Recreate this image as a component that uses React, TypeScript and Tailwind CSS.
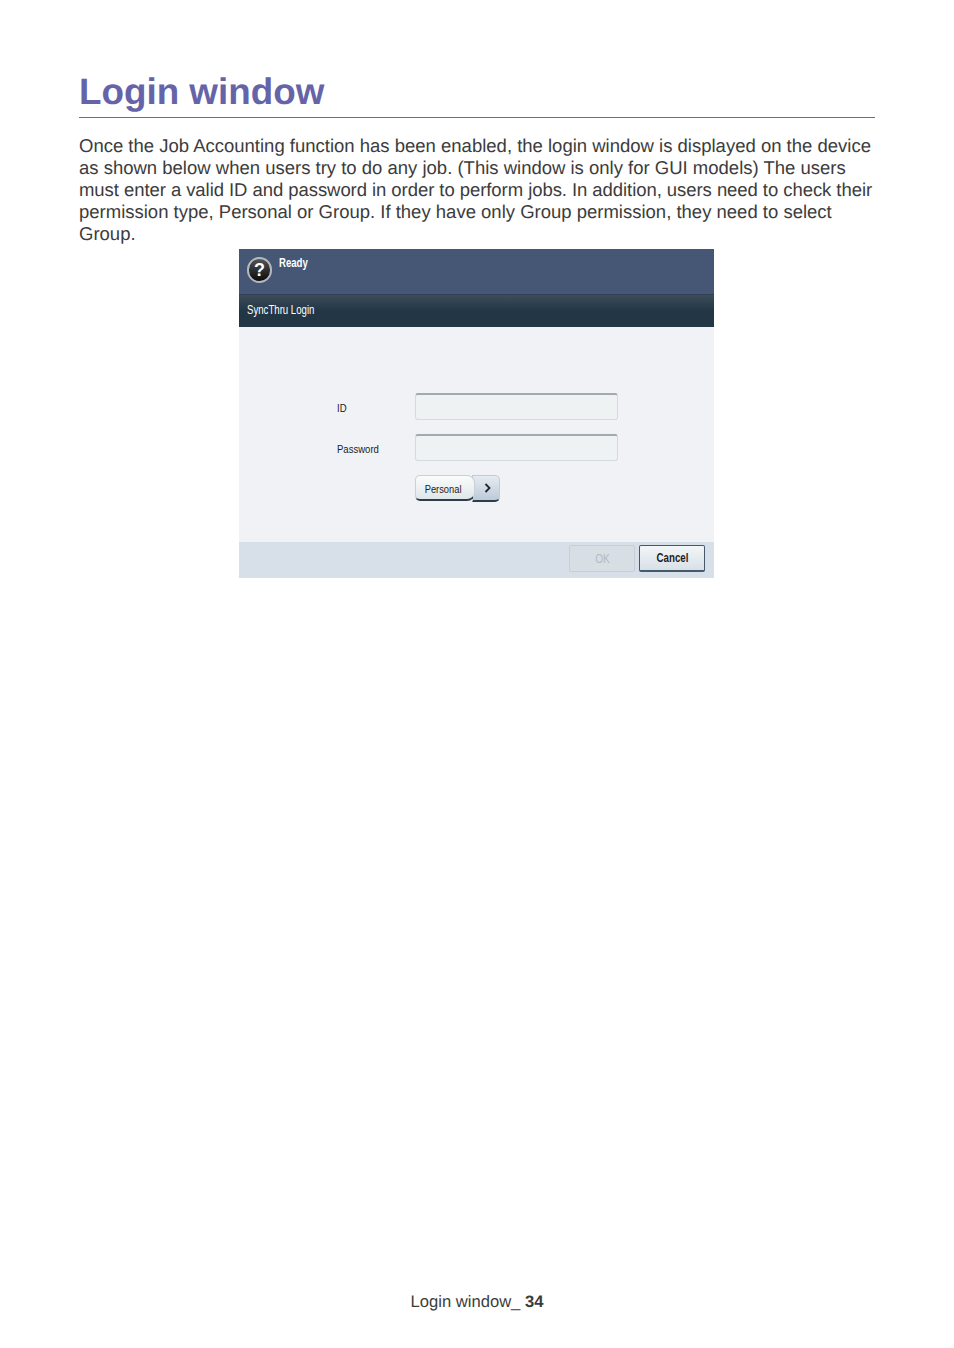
const font = "font-['Liberation_Sans',Arial,sans-serif]";

function HelpIcon() {
  return (
    <div className="flex h-[26px] w-[25px] items-center justify-center rounded-full border-2 border-[#b4b8c0] bg-gradient-to-b from-[#555] to-[#0c0c0c]">
      <span className="text-[18px] font-bold leading-none text-white">?</span>
    </div>
  );
}

function DeviceScreen() {
  return (
    <div className="ml-[160px] flex h-[329px] w-[475px] flex-col bg-[#f0f2f6]">
      {/* status bar */}
      <div className="flex h-[46px] gap-[6px] border-b border-[#303f55] bg-[#465675] pl-[8px] pt-[8px]">
        <HelpIcon />
        <span className="-mt-[1px] ml-[1px] inline-block origin-left scale-x-[.8] text-[12px] font-bold leading-[14px] text-white">Ready</span>
      </div>
      {/* title */}
      <div className="flex h-[32px] items-center bg-gradient-to-b from-[#3d4c58] via-[#223646] to-[#223646] pb-[3px] pl-[8px]">
        <span className="inline-block origin-left scale-x-[.77] text-[12.5px] leading-[14px] text-white">SyncThru Login</span>
      </div>
      {/* form */}
      <div className="flex flex-1 flex-col pl-[98px] pt-[66px]">
        <div className="flex h-[27px] items-center">
          <span className="w-[78px] origin-left scale-x-[.83] pt-[5px] text-[11.5px] text-[#222]">ID</span>
          <div className="h-[27px] w-[203px] rounded-[3px] border border-t-2 border-[#d5dadd] border-t-[#a3a9ad] bg-[#eff2f3]" />
        </div>
        <div className="mt-[14px] flex h-[27px] items-center">
          <span className="w-[78px] origin-left scale-x-[.83] pt-[5px] text-[11.5px] text-[#222]">Password</span>
          <div className="h-[27px] w-[203px] rounded-[3px] border border-t-2 border-[#d5dadd] border-t-[#a3a9ad] bg-[#eff2f3]" />
        </div>
        <div className="ml-[78px] mt-[14px] flex h-[27px] w-[85px]">
          <div className="z-10 flex h-[26px] w-[61px] items-center justify-center rounded-l-[5px] rounded-r-[8px] border border-b-2 border-[#c9d0d6] border-b-[#2f3d49] bg-gradient-to-b from-[#fbfcfc] to-[#dfe7ea]">
            <span className="inline-block scale-x-[.81] pr-[4px] pt-[5px] text-[11.5px] text-[#222]">Personal</span>
          </div>
          <div className="-ml-[3px] flex h-[27px] w-[28px] items-center justify-center rounded-r-[5px] border border-b-2 border-[#c3ccd6] border-b-[#2f3d49] bg-gradient-to-b from-[#e6ebf1] to-[#bccad9] pl-[2px]">
            <svg width="7" height="10" viewBox="0 0 7 10" fill="none">
              <path d="M1.5 1 L5.5 5 L1.5 9" stroke="#1d2833" strokeWidth="1.8" />
            </svg>
          </div>
        </div>
      </div>
      {/* footer */}
      <div className="flex h-[36px] items-start justify-end gap-[4px] bg-[#d7dfe9] pr-[9px] pt-[3px]">
        <div className="flex h-[27px] w-[66px] items-center justify-center rounded-[2px] border border-[#c6ced6] bg-[#d7dfe5]">
          <span className="inline-block scale-x-[.85] pl-[2px] pt-[1px] text-[12px] text-[#b3bbc2]">OK</span>
        </div>
        <div className="flex h-[27px] w-[66px] items-center justify-center rounded-[2px] border border-b-2 border-[#46596b] bg-gradient-to-b from-[#f3f6f8] to-[#d8e0e7]">
          <span className="inline-block scale-x-[.81] pl-[2px] text-[12px] font-bold text-[#1d1d1d]">Cancel</span>
        </div>
      </div>
    </div>
  );
}

export default function App() {
  return (
    <div className={`${font} flex h-[1348px] w-[954px] flex-col bg-white px-[79px] pt-[69px]`}>
      <h1 className="h-[49px] border-b border-[#6c68a8] text-[36.8px] font-bold leading-[46px] text-[#6664a8] [text-rendering:geometricPrecision]">
        Login window
      </h1>
      <p className="mt-[17px] whitespace-nowrap text-[18.5px] leading-[22px] text-[#3c3c3c] [text-rendering:geometricPrecision]">
        Once the Job Accounting function has been enabled, the login window is displayed on the device
        <br />
        as shown below when users try to do any job. (This window is only for GUI models) The users
        <br />
        <span className="tracking-[-0.06px]">must enter a valid ID and password in order to perform jobs. In addition, users need to check their</span>
        <br />
        permission type, Personal or Group. If they have only Group permission, they need to select
        <br />
        Group.
      </p>
      <div className="mt-[4px]">
        <DeviceScreen />
      </div>
      <div className="mt-[713px] text-center text-[16.6px] leading-[22px] text-[#3c3c3c] [text-rendering:geometricPrecision]">
        Login window_ <span className="font-bold">34</span>
      </div>
    </div>
  );
}
